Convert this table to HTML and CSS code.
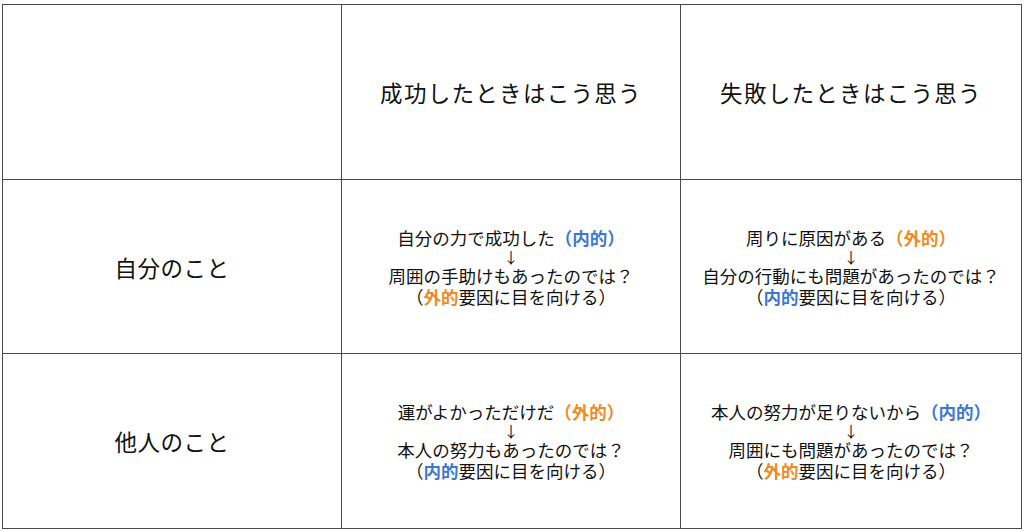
FILE: index.html
```html
<!DOCTYPE html>
<html lang="ja">
<head>
<meta charset="utf-8">
<link rel="stylesheet" href="styles.css">
</head>
<body>
<div class="grid">
  <div class="cell"></div>
  <div class="cell head">成功したときはこう思う</div>
  <div class="cell head">失敗したときはこう思う</div>

  <div class="cell side">自分のこと</div>
  <div class="cell body">
    <p>自分の力で成功した<b class="in">（内的）</b></p>
    <p class="arrow">↓</p>
    <p>周囲の手助けもあったのでは？</p>
    <p>（<b class="out">外的</b>要因に目を向ける）</p>
  </div>
  <div class="cell body">
    <p>周りに原因がある<b class="out">（外的）</b></p>
    <p class="arrow">↓</p>
    <p>自分の行動にも問題があったのでは？</p>
    <p>（<b class="in">内的</b>要因に目を向ける）</p>
  </div>

  <div class="cell side">他人のこと</div>
  <div class="cell body">
    <p>運がよかっただけだ<b class="out">（外的）</b></p>
    <p class="arrow">↓</p>
    <p>本人の努力もあったのでは？</p>
    <p>（<b class="in">内的</b>要因に目を向ける）</p>
  </div>
  <div class="cell body">
    <p>本人の努力が足りないから<b class="in">（内的）</b></p>
    <p class="arrow">↓</p>
    <p>周囲にも問題があったのでは？</p>
    <p>（<b class="out">外的</b>要因に目を向ける）</p>
  </div>
</div>
</body>
</html>
```

FILE: styles.css
```css
html, body {
  margin: 0;
  padding: 0;
  background: #ffffff;
}
body {
  font-family: "Noto Sans CJK JP", "Noto Sans", sans-serif;
  color: #111111;
  padding: 4px 0 0 2px;
}
.grid {
  display: grid;
  grid-template-columns: 339px 339px 341px;
  grid-template-rows: 175px 174px 175px;
  width: 1020px;
  border-top: 1px solid #4a4a4a;
  border-left: 1px solid #4a4a4a;
  box-sizing: border-box;
}
.cell {
  border-right: 1px solid #4a4a4a;
  border-bottom: 1px solid #4a4a4a;
  display: flex;
  flex-direction: column;
  align-items: center;
  justify-content: center;
  text-align: center;
}
.head {
  font-size: 22.5px;
  letter-spacing: 1.3px;
  padding-top: 0;
}
.side {
  font-size: 22.5px;
  letter-spacing: 0.5px;
}
.body {
  font-size: 17.5px;
  line-height: 21px;
}
.body p {
  margin: 0;
  white-space: nowrap;
}
.body .arrow {
  font-size: 15px;
  line-height: 17px;
}
b {
  font-weight: 700;
}
.in {
  color: #3b78d4;
}
.out {
  color: #f08a24;
}
```
